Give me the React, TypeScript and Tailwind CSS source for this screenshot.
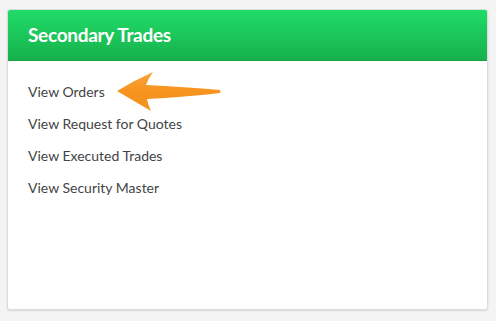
import React from 'react';

const links = ['View Orders', 'View Request for Quotes', 'View Executed Trades', 'View Security Master'];

const Arrow: React.FC = () => (
  <svg
    className="absolute left-[110px] top-[64px]"
    width="120"
    height="54"
    viewBox="110 64 120 54"
  >
    <defs>
      <linearGradient id="arrowFill" x1="0" y1="0" x2="0" y2="1">
        <stop offset="0" stopColor="#f9a43a" />
        <stop offset="0.5" stopColor="#f7931e" />
        <stop offset="1" stopColor="#f39320" />
      </linearGradient>
    </defs>
    <path
      d="M117,91 Q135,80 153,72 Q148,79 146,85 Q185,87 220,90 Q221,91.5 220,93 Q185,97 147,99 Q148,105 151,111 Q134,101 117,91 Z"
      fill="url(#arrowFill)"
    />
  </svg>
);

const App: React.FC = () => {
  return (
    <div className="w-[496px] h-[321px] bg-[#f4f4f4] pt-[9px] pl-[7px]" style={{ fontFamily: 'Lato, "Open Sans", sans-serif' }}>
      <div className="relative w-[481px] h-[301px] bg-white rounded-[3px] border border-[#dcdcdc] shadow-[0_1px_2px_rgba(0,0,0,0.12)] overflow-hidden">
        <div className="h-[51px] flex items-center pl-[20px] bg-gradient-to-b from-[#20dc68] to-[#17b14c] border-b border-[#15a447]">
          <h2 className="text-white font-bold text-[19px] tracking-[-0.3px]">Secondary Trades</h2>
        </div>
        <ul className="pt-[20px] pl-[20px] flex flex-col">
          {links.map((l) => (
            <li key={l} className="h-[32px] text-[14px] text-[#444]">
              {l}
            </li>
          ))}
        </ul>
      </div>
      <div className="absolute left-0 top-0">
        <Arrow />
      </div>
    </div>
  );
};

export default App;
